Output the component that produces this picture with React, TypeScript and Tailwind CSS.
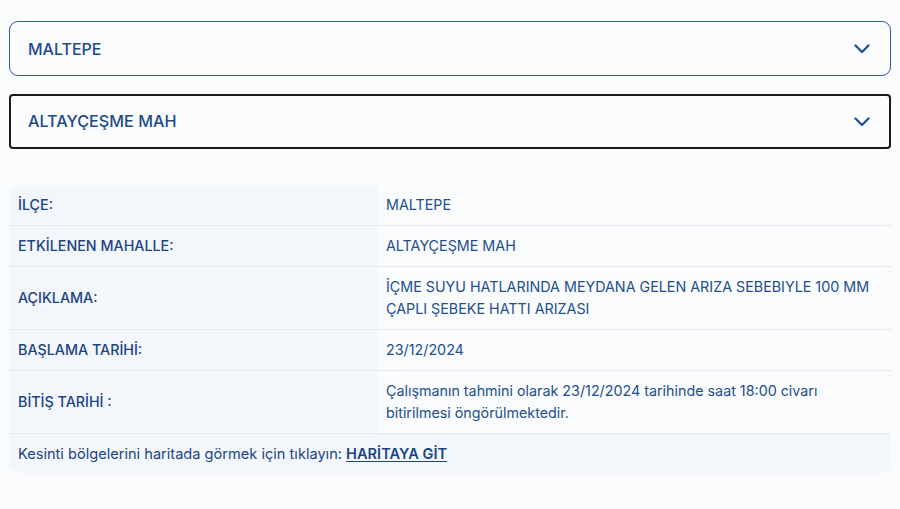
import { useState } from "react"

interface Row {
  label: string;
  value: string;
}

const rows: Row[] = [
  { label: "İLÇE:", value: "MALTEPE" },
  { label: "ETKİLENEN MAHALLE:", value: "ALTAYÇEŞME MAH" },
  { label: "AÇIKLAMA:", value: "İÇME SUYU HATLARINDA MEYDANA GELEN ARIZA SEBEBIYLE 100 MM ÇAPLI ŞEBEKE HATTI ARIZASI" },
  { label: "BAŞLAMA TARİHİ:", value: "23/12/2024" },
  { label: "BİTİŞ TARİHİ :", value: "Çalışmanın tahmini olarak 23/12/2024 tarihinde saat 18:00 civarı bitirilmesi öngörülmektedir." },
]

const Chevron = () => (
  <svg className="w-[16px] h-[10px] text-[#1f4e8f]" viewBox="0 0 16 10" fill="none" stroke="currentColor">
    <path d="M1.5 1.5l6.5 6.5 6.5-6.5" strokeWidth={2.2} strokeLinecap="round" strokeLinejoin="round" />
  </svg>
)

const App = () => {
  const [ilce] = useState("MALTEPE")
  const [mahalle] = useState("ALTAYÇEŞME MAH")

  return (
    <div className="min-h-[509px] bg-[#f9fbfd] px-[9px] pt-[21px] text-[#1f4a89]" style={{ fontFamily: "Inter, 'Noto Sans', sans-serif" }}>
      <div className="flex items-center justify-between h-[55px] border border-[#2f5b9c] rounded-[9px] pl-[18px] pr-[20px] text-[16px] font-medium">
        <span>{ilce}</span>
        <Chevron />
      </div>
      <div className="mt-[18px] flex items-center justify-between h-[55px] border-2 border-[#1b1b1b] rounded-[4px] pl-[17px] pr-[19px] text-[16.2px] font-medium">
        <span>{mahalle}</span>
        <Chevron />
      </div>

      <div className="mt-[36px] rounded-[10px] overflow-hidden bg-[#f3f6fb] text-[14.3px] leading-[22px]">
        {rows.map((row) => (
          <div key={row.label} className="grid grid-cols-[368px_1fr] border-b border-[#e6e9ee]">
            <div className="flex items-center px-[9px] py-[9px] font-medium text-[#1d4584]">{row.label}</div>
            <div className="bg-[#f9fbfd] pl-[9px] py-[9px] pr-[6px] text-[#244f8c]">{row.value}</div>
          </div>
        ))}
        <div className="px-[9px] h-[39px] flex items-center text-[14.6px] text-[#1d4584]">
          <span>Kesinti bölgelerini haritada görmek için tıklayın:&nbsp;</span>
          <a href="#" className="font-semibold underline underline-offset-2">HARİTAYA GİT</a>
        </div>
      </div>
    </div>
  )
}

export default App
